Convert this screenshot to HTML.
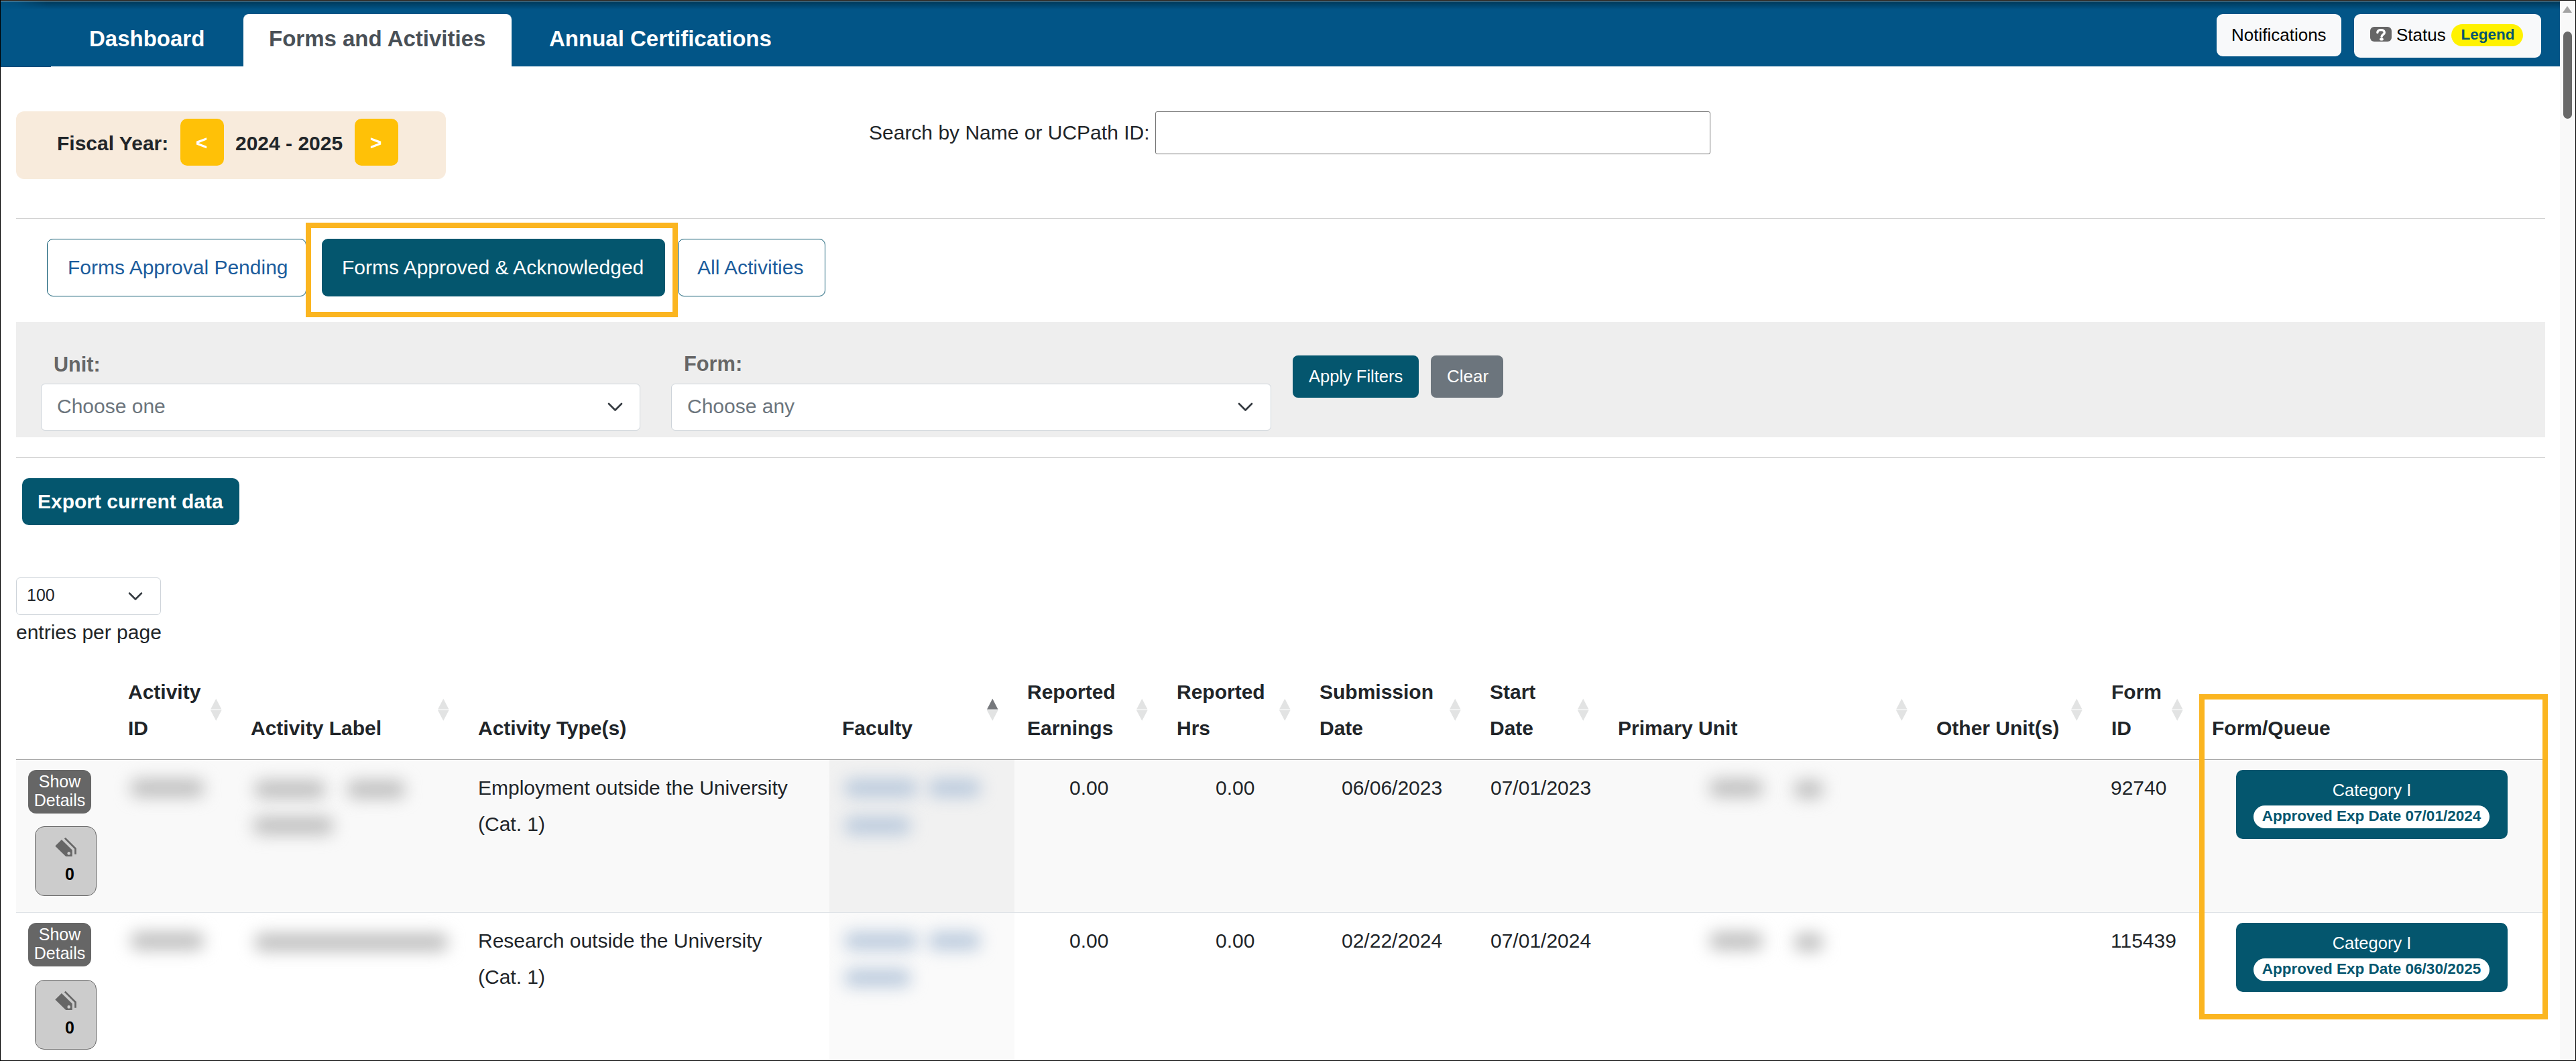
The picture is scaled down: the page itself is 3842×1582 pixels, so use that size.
<!DOCTYPE html>
<html>
<head>
<meta charset="utf-8">
<style>
*{box-sizing:border-box;margin:0;padding:0}
html,body{width:3842px;height:1582px;overflow:hidden;background:#fff}
body{position:relative;font-family:"Liberation Sans",sans-serif;color:#212529}
.a{position:absolute}
.t{position:absolute;white-space:nowrap;line-height:1}
.b{font-weight:700}
/* frame */
#frame{position:absolute;left:0;top:0;width:3842px;height:1582px;border:1px solid #000;pointer-events:none;z-index:50}
</style>
</head>
<body>
<!-- header bar -->
<div class="a" style="left:1px;top:1px;width:3817px;height:1px;background:#f3eee2"></div>
<div class="a" style="left:1px;top:2px;width:3817px;height:97px;background:#025587"></div>
<div class="a" style="left:1px;top:2px;width:3817px;height:12px;background:linear-gradient(#00324f 0%,rgba(2,86,138,0) 100%);opacity:.85;-webkit-mask-image:linear-gradient(to right,rgba(0,0,0,.15) 0px,rgba(0,0,0,.3) 25px,#000 70px)"></div>
<div class="a" style="left:1px;top:99px;width:75px;height:1px;background:#024a78"></div>
<div class="a" style="left:363px;top:21px;width:400px;height:78px;background:#fff;border-radius:8px 8px 0 0"></div>
<div class="t b" style="left:133px;top:41px;font-size:33px;color:#fff">Dashboard</div>
<div class="t b" style="left:401px;top:41px;font-size:33px;color:#495057">Forms and Activities</div>
<div class="t b" style="left:819px;top:41px;font-size:33px;color:#fff">Annual Certifications</div>

<div class="a" style="left:3306px;top:21px;width:186px;height:63px;background:#f8f9fa;border-radius:9px"></div>
<div class="t" style="left:3328px;top:39px;font-size:26px;color:#000">Notifications</div>
<div class="a" style="left:3511px;top:21px;width:279px;height:65px;background:#f8f9fa;border-radius:9px"></div>
<div class="a" style="left:3535px;top:40px;width:32px;height:22px;background:#666;border-radius:6px"></div>
<svg class="a" style="left:3535px;top:40px" width="32" height="22" viewBox="0 0 32 22"><path d="M10.9 8.6 C10.9 5.6 13.2 4.6 16.2 4.6 C19.3 4.6 21.3 6.2 21.3 8.5 C21.3 11.6 17.3 11.7 17.1 14.6" fill="none" stroke="#fff" stroke-width="3.4" stroke-linecap="round"/><ellipse cx="17" cy="18.6" rx="2.9" ry="2" fill="#fff"/></svg>
<div class="t" style="left:3574px;top:39px;font-size:26px;color:#000">Status</div>
<div class="a" style="left:3656px;top:36px;width:107px;height:33px;background:#fff200;border-radius:17px"></div>
<div class="t b" style="left:3670.5px;top:40.5px;font-size:22.5px;color:#04566e">Legend</div>

<!-- scrollbar -->
<div class="a" style="left:3818px;top:1px;width:23px;height:1580px;background:#f9f9f9"></div>
<div class="a" style="left:3822px;top:9px;width:0;height:0;border-left:7.5px solid transparent;border-right:7.5px solid transparent;border-bottom:10px solid #a3a3a3"></div>
<div class="a" style="left:3823px;top:47px;width:13px;height:130px;background:#686868;border-radius:6.5px"></div>

<!-- fiscal year -->
<div class="a" style="left:24px;top:166px;width:641px;height:101px;background:#f8ebdc;border-radius:12px"></div>
<div class="t b" style="left:85px;top:199px;font-size:30px">Fiscal Year:</div>
<div class="a" style="left:269px;top:177px;width:65px;height:70px;background:#ffc107;border-radius:10px"></div>
<div class="t b" style="left:292px;top:198px;font-size:30px;color:#fff">&lt;</div>
<div class="t b" style="left:351px;top:199px;font-size:30px">2024 - 2025</div>
<div class="a" style="left:529px;top:177px;width:65px;height:70px;background:#ffc107;border-radius:10px"></div>
<div class="t b" style="left:552px;top:198px;font-size:30px;color:#fff">&gt;</div>

<!-- search -->
<div class="t" style="left:1296px;top:183px;font-size:30px">Search by Name or UCPath ID:</div>
<div class="a" style="left:1723px;top:166px;width:828px;height:64px;border:1.5px solid #767676;border-radius:3px"></div>

<div class="a" style="left:24px;top:325px;width:3772px;height:1px;background:#c8c8c8"></div>

<!-- tabs -->
<div class="a" style="left:70px;top:356px;width:387px;height:86px;border:1.5px solid #0b5870;border-radius:9px"></div>
<div class="t" style="left:101px;top:384px;font-size:30px;color:#1b5c9c">Forms Approval Pending</div>
<div class="a" style="left:480px;top:356px;width:512px;height:86px;background:#04566e;border-radius:9px"></div>
<div class="t" style="left:510px;top:384px;font-size:30px;color:#fff">Forms Approved &amp; Acknowledged</div>
<div class="a" style="left:1011px;top:356px;width:220px;height:86px;border:1.5px solid #0b5870;border-radius:9px"></div>
<div class="t" style="left:1040px;top:384px;font-size:30px;color:#1b5c9c">All Activities</div>
<div class="a" style="left:456px;top:332px;width:555px;height:141px;border:8px solid #fbb520"></div>

<!-- filters -->
<div class="a" style="left:24px;top:480px;width:3772px;height:172px;background:#eeeeee"></div>
<div class="t b" style="left:80px;top:528px;font-size:30.6px;color:#666">Unit:</div>
<div class="a" style="left:61px;top:572px;width:894px;height:70px;background:#fff;border:1.5px solid #ced4da;border-radius:6px"></div>
<div class="t" style="left:85px;top:591px;font-size:30px;color:#6c757d">Choose one</div>
<svg class="a" style="left:905px;top:598px" width="25" height="18" viewBox="0 0 25 18"><path d="M3 4 L12.5 13.5 L22 4" fill="none" stroke="#343a40" stroke-width="2.7" stroke-linecap="round" stroke-linejoin="round"/></svg>
<div class="t b" style="left:1020px;top:528px;font-size:30.8px;color:#666">Form:</div>
<div class="a" style="left:1001px;top:572px;width:895px;height:70px;background:#fff;border:1.5px solid #ced4da;border-radius:6px"></div>
<div class="t" style="left:1025px;top:591px;font-size:30px;color:#6c757d">Choose any</div>
<svg class="a" style="left:1845px;top:598px" width="25" height="18" viewBox="0 0 25 18"><path d="M3 4 L12.5 13.5 L22 4" fill="none" stroke="#343a40" stroke-width="2.7" stroke-linecap="round" stroke-linejoin="round"/></svg>
<div class="a" style="left:1928px;top:530px;width:188px;height:63px;background:#04566e;border-radius:8px"></div>
<div class="t" style="left:1952px;top:549px;font-size:25.5px;color:#fff">Apply Filters</div>
<div class="a" style="left:2134px;top:530px;width:108px;height:63px;background:#6c757d;border-radius:8px"></div>
<div class="t" style="left:2158px;top:548px;font-size:26px;color:#fff">Clear</div>

<div class="a" style="left:24px;top:682px;width:3772px;height:1px;background:#c8c8c8"></div>

<!-- export -->
<div class="a" style="left:33px;top:713px;width:324px;height:70px;background:#04566e;border-radius:10px"></div>
<div class="t b" style="left:56px;top:733px;font-size:30px;color:#fff">Export current data</div>

<!-- length -->
<div class="a" style="left:24px;top:861px;width:216px;height:56px;background:#fff;border:1.5px solid #ced4da;border-radius:6px"></div>
<div class="t" style="left:40px;top:875px;font-size:25px">100</div>
<svg class="a" style="left:190px;top:881px" width="24" height="17" viewBox="0 0 24 17"><path d="M3 3.5 L12 12.5 L21 3.5" fill="none" stroke="#343a40" stroke-width="2.5" stroke-linecap="round" stroke-linejoin="round"/></svg>
<div class="t" style="left:24px;top:928px;font-size:30px">entries per page</div>


<!-- ===== TABLE ===== -->
<div class="a" style="left:24px;top:1132px;width:3772px;height:1px;background:#a8a8a8"></div>
<div class="a" style="left:24px;top:1133px;width:3772px;height:227px;background:#f9f9f9"></div>
<div class="a" style="left:1237px;top:1133px;width:276px;height:227px;background:#f1f1f1"></div>
<div class="a" style="left:24px;top:1360px;width:3772px;height:1px;background:#dee2e6"></div>
<div class="a" style="left:1237px;top:1361px;width:276px;height:220px;background:#fafafa"></div>

<!-- header text -->
<div class="t b" style="left:191px;top:1017px;font-size:30px">Activity</div>
<div class="t b" style="left:191px;top:1071px;font-size:30px">ID</div>
<div class="t b" style="left:374px;top:1071px;font-size:30px">Activity Label</div>
<div class="t b" style="left:713px;top:1071px;font-size:30px">Activity Type(s)</div>
<div class="t b" style="left:1256px;top:1071px;font-size:30px">Faculty</div>
<div class="t b" style="left:1532px;top:1017px;font-size:30px">Reported</div>
<div class="t b" style="left:1532px;top:1071px;font-size:30px">Earnings</div>
<div class="t b" style="left:1755px;top:1017px;font-size:30px">Reported</div>
<div class="t b" style="left:1755px;top:1071px;font-size:30px">Hrs</div>
<div class="t b" style="left:1968px;top:1017px;font-size:30px">Submission</div>
<div class="t b" style="left:1968px;top:1071px;font-size:30px">Date</div>
<div class="t b" style="left:2222px;top:1017px;font-size:30px">Start</div>
<div class="t b" style="left:2222px;top:1071px;font-size:30px">Date</div>
<div class="t b" style="left:2413px;top:1071px;font-size:30px">Primary Unit</div>
<div class="t b" style="left:2888px;top:1071px;font-size:30px">Other Unit(s)</div>
<div class="t b" style="left:3149px;top:1017px;font-size:30px">Form</div>
<div class="t b" style="left:3149px;top:1071px;font-size:30px">ID</div>
<div class="t b" style="left:3299px;top:1071px;font-size:30px">Form/Queue</div>
<svg class="a" style="left:314.4px;top:1041px" width="17" height="35" viewBox="0 0 17 35"><path d="M8.25 0.8 L16.5 16.7 L0 16.7 Z" fill="#e2e3e3"/><path d="M0 18 L16.5 18 L8.25 33.7 Z" fill="#e2e3e3"/></svg>
<svg class="a" style="left:653.0px;top:1041px" width="17" height="35" viewBox="0 0 17 35"><path d="M8.25 0.8 L16.5 16.7 L0 16.7 Z" fill="#e2e3e3"/><path d="M0 18 L16.5 18 L8.25 33.7 Z" fill="#e2e3e3"/></svg>
<svg class="a" style="left:1471.5px;top:1041px" width="17" height="35" viewBox="0 0 17 35"><path d="M8.25 0.8 L16.5 16.7 L0 16.7 Z" fill="#76787c"/><path d="M0 18 L16.5 18 L8.25 33.7 Z" fill="#e2e3e3"/></svg>
<svg class="a" style="left:1694.7px;top:1041px" width="17" height="35" viewBox="0 0 17 35"><path d="M8.25 0.8 L16.5 16.7 L0 16.7 Z" fill="#e2e3e3"/><path d="M0 18 L16.5 18 L8.25 33.7 Z" fill="#e2e3e3"/></svg>
<svg class="a" style="left:1908.0px;top:1041px" width="17" height="35" viewBox="0 0 17 35"><path d="M8.25 0.8 L16.5 16.7 L0 16.7 Z" fill="#e2e3e3"/><path d="M0 18 L16.5 18 L8.25 33.7 Z" fill="#e2e3e3"/></svg>
<svg class="a" style="left:2162.0px;top:1041px" width="17" height="35" viewBox="0 0 17 35"><path d="M8.25 0.8 L16.5 16.7 L0 16.7 Z" fill="#e2e3e3"/><path d="M0 18 L16.5 18 L8.25 33.7 Z" fill="#e2e3e3"/></svg>
<svg class="a" style="left:2352.8px;top:1041px" width="17" height="35" viewBox="0 0 17 35"><path d="M8.25 0.8 L16.5 16.7 L0 16.7 Z" fill="#e2e3e3"/><path d="M0 18 L16.5 18 L8.25 33.7 Z" fill="#e2e3e3"/></svg>
<svg class="a" style="left:2828.0px;top:1041px" width="17" height="35" viewBox="0 0 17 35"><path d="M8.25 0.8 L16.5 16.7 L0 16.7 Z" fill="#e2e3e3"/><path d="M0 18 L16.5 18 L8.25 33.7 Z" fill="#e2e3e3"/></svg>
<svg class="a" style="left:3088.5px;top:1041px" width="17" height="35" viewBox="0 0 17 35"><path d="M8.25 0.8 L16.5 16.7 L0 16.7 Z" fill="#e2e3e3"/><path d="M0 18 L16.5 18 L8.25 33.7 Z" fill="#e2e3e3"/></svg>
<svg class="a" style="left:3239.0px;top:1041px" width="17" height="35" viewBox="0 0 17 35"><path d="M8.25 0.8 L16.5 16.7 L0 16.7 Z" fill="#e2e3e3"/><path d="M0 18 L16.5 18 L8.25 33.7 Z" fill="#e2e3e3"/></svg>
<div class="a" style="left:42px;top:1148px;width:94px;height:65px;background:#666;border-radius:12px"></div>
<div class="t" style="left:42px;top:1151px;width:94px;text-align:center;font-size:25px;line-height:28px;color:#fff;white-space:normal">Show<br>Details</div>
<div class="a" style="left:52px;top:1232px;width:92px;height:104px;background:#cccccc;border:1px solid #666;border-radius:14px"></div>
<svg class="a" style="left:76px;top:1244px" width="44" height="38" viewBox="0 0 44 38"><path d="M6.3 17.5 L15.9 8.1 L31.7 23.5 L31.7 32.9 L22.2 33.1 Z" fill="#666"/><circle cx="26.7" cy="28.4" r="2.3" fill="#ccc"/><path d="M20.8 5.6 L36.5 21.2 L36.5 29.8" fill="none" stroke="#666" stroke-width="2.7"/></svg>
<div class="t b" style="left:97px;top:1291px;font-size:25px;color:#000">0</div>
<div class="a" style="left:42px;top:1376px;width:94px;height:65px;background:#666;border-radius:12px"></div>
<div class="t" style="left:42px;top:1379px;width:94px;text-align:center;font-size:25px;line-height:28px;color:#fff;white-space:normal">Show<br>Details</div>
<div class="a" style="left:52px;top:1461px;width:92px;height:104px;background:#cccccc;border:1px solid #666;border-radius:14px"></div>
<svg class="a" style="left:76px;top:1473px" width="44" height="38" viewBox="0 0 44 38"><path d="M6.3 17.5 L15.9 8.1 L31.7 23.5 L31.7 32.9 L22.2 33.1 Z" fill="#666"/><circle cx="26.7" cy="28.4" r="2.3" fill="#ccc"/><path d="M20.8 5.6 L36.5 21.2 L36.5 29.8" fill="none" stroke="#666" stroke-width="2.7"/></svg>
<div class="t b" style="left:97px;top:1520px;font-size:25px;color:#000">0</div>

<!-- row 1 data -->
<div class="t" style="left:713px;top:1148px;font-size:30px;line-height:54px">Employment outside the University<br>(Cat. 1)</div>
<div class="t" style="left:1595px;top:1160px;font-size:30px">0.00</div>
<div class="t" style="left:1813px;top:1160px;font-size:30px">0.00</div>
<div class="t" style="left:2001px;top:1160px;font-size:30px">06/06/2023</div>
<div class="t" style="left:2223px;top:1160px;font-size:30px">07/01/2023</div>
<div class="t" style="left:3148px;top:1160px;font-size:30px">92740</div>
<!-- row 2 data -->
<div class="t" style="left:713px;top:1376px;font-size:30px;line-height:54px">Research outside the University<br>(Cat. 1)</div>
<div class="t" style="left:1595px;top:1388px;font-size:30px">0.00</div>
<div class="t" style="left:1813px;top:1388px;font-size:30px">0.00</div>
<div class="t" style="left:2001px;top:1388px;font-size:30px">02/22/2024</div>
<div class="t" style="left:2223px;top:1388px;font-size:30px">07/01/2024</div>
<div class="t" style="left:3148px;top:1388px;font-size:30px">115439</div>
<div class="a" style="left:195px;top:1162.0px;width:109px;height:26px;background:#bdbdbd;border-radius:10px;filter:blur(12px)"></div>
<div class="a" style="left:380px;top:1164.0px;width:105px;height:26px;background:#bdbdbd;border-radius:10px;filter:blur(12px)"></div>
<div class="a" style="left:518px;top:1164.0px;width:86px;height:26px;background:#bdbdbd;border-radius:10px;filter:blur(12px)"></div>
<div class="a" style="left:378px;top:1217.5px;width:119px;height:26px;background:#bdbdbd;border-radius:10px;filter:blur(12px)"></div>
<div class="a" style="left:1260px;top:1162.0px;width:108px;height:26px;background:#b9c9dc;border-radius:10px;filter:blur(12px)"></div>
<div class="a" style="left:1385px;top:1162.0px;width:77px;height:26px;background:#b9c9dc;border-radius:10px;filter:blur(12px)"></div>
<div class="a" style="left:1260px;top:1218.0px;width:98px;height:26px;background:#b9c9dc;border-radius:10px;filter:blur(12px)"></div>
<div class="a" style="left:2550px;top:1162.0px;width:79px;height:26px;background:#bdbdbd;border-radius:10px;filter:blur(12px)"></div>
<div class="a" style="left:2676px;top:1164.0px;width:43px;height:26px;background:#bdbdbd;border-radius:10px;filter:blur(12px)"></div>
<div class="a" style="left:195px;top:1390.0px;width:109px;height:26px;background:#bdbdbd;border-radius:10px;filter:blur(12px)"></div>
<div class="a" style="left:380px;top:1392.0px;width:288px;height:26px;background:#bdbdbd;border-radius:10px;filter:blur(12px)"></div>
<div class="a" style="left:1260px;top:1390.0px;width:108px;height:26px;background:#b9c9dc;border-radius:10px;filter:blur(12px)"></div>
<div class="a" style="left:1385px;top:1390.0px;width:77px;height:26px;background:#b9c9dc;border-radius:10px;filter:blur(12px)"></div>
<div class="a" style="left:1260px;top:1445.0px;width:98px;height:26px;background:#b9c9dc;border-radius:10px;filter:blur(12px)"></div>
<div class="a" style="left:2550px;top:1390.0px;width:79px;height:26px;background:#bdbdbd;border-radius:10px;filter:blur(12px)"></div>
<div class="a" style="left:2676px;top:1392.0px;width:43px;height:26px;background:#bdbdbd;border-radius:10px;filter:blur(12px)"></div>
<div class="a" style="left:3335px;top:1148px;width:405px;height:103px;background:#04566e;border-radius:10px"></div>
<div class="t" style="left:3335px;top:1166px;width:405px;text-align:center;font-size:25.5px;color:#fff">Category I</div>
<div class="a" style="left:3361px;top:1201px;width:352px;height:34px;background:#fff;border-radius:17px"></div>
<div class="t b" style="left:3361px;top:1206px;width:352px;text-align:center;font-size:22.5px;color:#04566e">Approved Exp Date 07/01/2024</div>
<div class="a" style="left:3335px;top:1376px;width:405px;height:103px;background:#04566e;border-radius:10px"></div>
<div class="t" style="left:3335px;top:1394px;width:405px;text-align:center;font-size:25.5px;color:#fff">Category I</div>
<div class="a" style="left:3361px;top:1429px;width:352px;height:34px;background:#fff;border-radius:17px"></div>
<div class="t b" style="left:3361px;top:1434px;width:352px;text-align:center;font-size:22.5px;color:#04566e">Approved Exp Date 06/30/2025</div>
<div class="a" style="left:3280px;top:1035px;width:520px;height:485px;border:8px solid #fbb520"></div>

<div id="frame"></div>
</body>
</html>
